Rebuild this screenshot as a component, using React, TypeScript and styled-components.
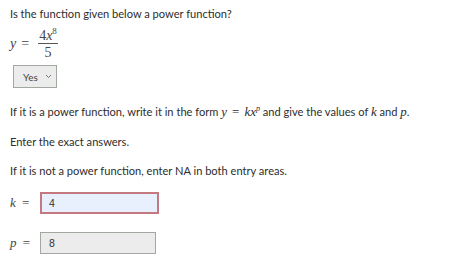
import styled, { createGlobalStyle } from "styled-components";

const Global = createGlobalStyle`
  body {
    margin: 0;
    background: #fff;
    font-family: Lato, "Open Sans", sans-serif;
    color: #2d2d2d;
  }
`;

const Page = styled.div`
  width: 474px;
  height: 264px;
  padding: 7px 10px 0 10px;
  box-sizing: border-box;
  overflow: hidden;
`;

const Text = styled.p<{ mt?: number }>`
  margin: ${({ mt }) => mt ?? 0}px 0 0 0;
  font-size: 11.1px;
  line-height: 13px;
  white-space: nowrap;
`;

const M = styled.span`
  font-family: "Liberation Serif", "DejaVu Serif", serif;
  font-style: italic;
  font-size: 13px;
  line-height: 1;
`;

const Op = styled.span`
  font-family: "Liberation Serif", "DejaVu Serif", serif;
  font-size: 13px;
  line-height: 1;
  margin: 0 5px;
`;

const Sup = styled.sup`
  font-family: "Liberation Serif", "DejaVu Serif", serif;
  font-style: italic;
  font-size: 8px;
  vertical-align: 5px;
  line-height: 0;
`;

const Equation = styled.div`
  display: flex;
  align-items: center;
  margin-top: 9px;
  font-family: "Liberation Serif", "DejaVu Serif", serif;
  font-size: 14px;
  color: #444;
`;

const EqVar = styled.span`
  font-style: italic;
`;

const EqOp = styled.span`
  margin: 0 7px 0 5px;
`;

const Fraction = styled.span`
  display: inline-flex;
  flex-direction: column;
  align-items: center;
  margin-left: 2px;
`;

const Num = styled.span`
  padding: 0 1px 1px 1px;
  border-bottom: 1px solid #555;
  line-height: 13px;
`;

const EqSup = styled.sup`
  font-size: 9px;
  vertical-align: 6px;
  line-height: 0;
`;

const Den = styled.span`
  line-height: 13px;
  padding-top: 2px;
`;

const Select = styled.div`
  display: flex;
  align-items: center;
  justify-content: space-between;
  width: 44px;
  height: 23px;
  box-sizing: border-box;
  margin: 6px 0 0 3px;
  padding: 0 4px 0 9px;
  border: 1px solid #a0a8a0;
  background: #ececec;
  font-size: 10px;
  color: #444;
`;

const Row = styled.div<{ mt: number }>`
  display: flex;
  align-items: center;
  margin-top: ${({ mt }) => mt}px;
`;

const Label = styled.span`
  font-family: "Liberation Serif", "DejaVu Serif", serif;
  font-size: 13px;
  width: 30px;
  color: #444;
  word-spacing: 3px;
`;

const Input = styled.div<{ active?: boolean; w: number }>`
  width: ${({ w }) => w}px;
  height: 22px;
  box-sizing: border-box;
  display: flex;
  align-items: center;
  padding-left: ${({ active }) => (active ? 7 : 8)}px;
  font-family: "Liberation Sans", Arial, sans-serif;
  font-size: 10.5px;
  color: #333;
  border: ${({ active }) => (active ? "2px solid #c47880" : "1px solid #a0a8a0")};
  background: ${({ active }) => (active ? "#e8f0fe" : "#ececec")};
`;

export default function App() {
  return (
    <Page>
      <Global />
      <Text>Is the function given below a power function?</Text>
      <Equation>
        <EqVar>y</EqVar>
        <EqOp>=</EqOp>
        <Fraction>
          <Num>
            4<EqVar>x</EqVar>
            <EqSup>8</EqSup>
          </Num>
          <Den>5</Den>
        </Fraction>
      </Equation>
      <Select>
        <span>Yes</span>
        <svg width="7" height="5" viewBox="0 0 7 5">
          <path d="M1 1 L3.5 3.5 L6 1" fill="none" stroke="#777" strokeWidth="1" />
        </svg>
      </Select>
      <Text mt={17}>
        If it is a power function, write it in the form <M>y</M>
        <Op>=</Op>
        <M>kx</M>
        <Sup>p</Sup> and give the values of <M>k</M> and <M>p</M>.
      </Text>
      <Text mt={17}>Enter the exact answers.</Text>
      <Text mt={16}>If it is not a power function, enter NA in both entry areas.</Text>
      <Row mt={15}>
        <Label>
          <i>k</i> =
        </Label>
        <Input active w={119}>
          4
        </Input>
      </Row>
      <Row mt={18}>
        <Label>
          <i>p</i> =
        </Label>
        <Input w={116}>8</Input>
      </Row>
    </Page>
  );
}
